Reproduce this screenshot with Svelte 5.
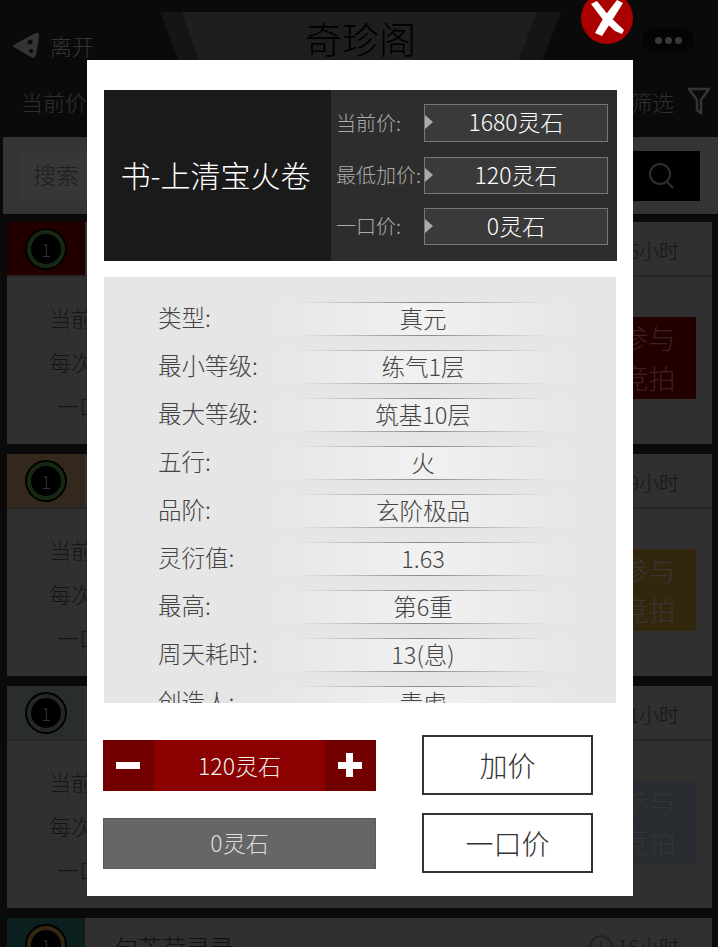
<script>
	const listings = [
		{ tone: 'red', ring: 'green', name: '', left: '6小时' },
		{ tone: 'tan', ring: 'green', name: '', left: '9小时' },
		{ tone: 'slate', ring: 'grey', name: '', left: '11小时' },
		{ tone: 'teal', ring: 'gold', name: '句芒荷灵录', left: '16小时' }
	];

	const prices = [
		{ label: '当前价:', value: '1680灵石' },
		{ label: '最低加价:', value: '120灵石' },
		{ label: '一口价:', value: '0灵石' }
	];

	const details = [
		['类型:', '真元'],
		['最小等级:', '练气1层'],
		['最大等级:', '筑基10层'],
		['五行:', '火'],
		['品阶:', '玄阶极品'],
		['灵衍值:', '1.63'],
		['最高:', '第6重'],
		['周天耗时:', '13(息)'],
		['创造人:', '青虚']
	];
</script>

<div class="page">
	<header class="topbar">
		<div class="back">
			<svg width="28" height="26" viewBox="0 0 28 26">
				<path d="M2 14 L24 2 Q27 1 26 5 L23 23 Q22 26 19 24 Z" fill="#ccc" stroke="#ccc" stroke-width="2" stroke-linejoin="round" />
				<circle cx="18" cy="10" r="2.5" fill="#282828" />
				<circle cx="19" cy="19" r="2" fill="#282828" />
			</svg>
			<span>离开</span>
		</div>
		<div class="title-plate"><h1>奇珍阁</h1></div>
		<div class="more"><i></i><i></i><i></i></div>
	</header>

	<div class="sortbar">
		<span>当前价</span>
		<div class="filter">
			<span>筛选</span>
			<svg width="22" height="28" viewBox="0 0 22 28" fill="none" stroke="#ccc" stroke-width="2.5">
				<path d="M1 2 H21 L13 13 V26 L9 23 V13 Z" />
			</svg>
		</div>
	</div>

	<div class="searchbar">
		<div class="search-input">搜索</div>
		<button class="search-btn" aria-label="搜索">
			<svg width="30" height="30" viewBox="0 0 30 30" fill="none" stroke="#bbb" stroke-width="2">
				<circle cx="14" cy="13" r="10" />
				<path d="M21 21 L27 27" />
			</svg>
		</button>
	</div>

	{#each listings as item}
		<article class="card">
			<div class="card-head">
				<div class="badge-cell {item.tone}">
					<div class="badge {item.ring}"><span>1</span></div>
				</div>
				<div class="card-name">{item.name}</div>
				<div class="time">
					<svg width="26" height="26" viewBox="0 0 26 26" fill="none" stroke="#888" stroke-width="2">
						<circle cx="13" cy="13" r="11" />
						<path d="M13 7 V14" />
					</svg>
					<span>{item.left}</span>
				</div>
			</div>
			<div class="card-body">
				<div class="card-lines">
					<p>当前价:</p>
					<p>每次加价:</p>
					<p class="indent">一口价:</p>
				</div>
				<div class="join-cell">
					<div class="join {item.tone}">参与<br />竞拍</div>
				</div>
			</div>
		</article>
	{/each}

	<div class="mask"></div>

	<div class="close">
		<svg width="52" height="52" viewBox="0 0 52 52">
			<circle cx="26" cy="26" r="26" fill="#ab0000" />
			<path d="M10 12 L16 9 L28 24 L43 38 L41 42 L34 39 L23 29 Z" fill="#fff" />
			<path d="M36 8 L42 11 L32 27 L21 44 L14 41 L23 25 Z" fill="#fff" />
		</svg>
	</div>

	<section class="modal">
		<div class="summary">
			<div class="item-name">书-上清宝火卷</div>
			<div class="price-list">
				{#each prices as price}
					<div class="price-row">
						<span class="price-label">{price.label}</span>
						<span class="price-value">{price.value}</span>
					</div>
				{/each}
			</div>
		</div>

		<div class="details">
			{#each details as [label, value]}
				<div class="detail-row">
					<span class="detail-label">{label}</span>
					<span class="detail-value">{value}</span>
				</div>
			{/each}
		</div>

		<div class="actions">
			<div class="amounts">
				<div class="stepper">
					<button class="step" aria-label="减少"><span class="minus"></span></button>
					<span class="step-value">120灵石</span>
					<button class="step" aria-label="增加"><span class="minus"></span><span class="plus-bar"></span></button>
				</div>
				<div class="buyout">0灵石</div>
			</div>
			<div class="buttons">
				<button class="outline">加价</button>
				<button class="outline">一口价</button>
			</div>
		</div>
	</section>
</div>

<style>
	:global(body) {
		margin: 0;
		background: #282828;
	}

	.page {
		position: relative;
		width: 718px;
		height: 947px;
		overflow: hidden;
		background: #282828;
		font-family: 'Noto Sans CJK SC', 'Noto Sans', sans-serif;
		font-weight: 300;
		color: #666;
	}

	.topbar {
		display: grid;
		grid-template-columns: 160px 401px 157px;
		height: 60px;
		padding-top: 12px;
		box-sizing: border-box;
	}

	.back {
		display: flex;
		align-items: center;
		gap: 10px;
		padding: 14px 0 0 12px;
		font-size: 22px;
		color: #ccc;
	}

	.title-plate {
		background: #555;
		clip-path: polygon(0 0, 100% 0, 95% 100%, 5% 100%);
	}

	.title-plate h1 {
		height: 100%;
		margin: 0;
		background: #7a7a7a;
		clip-path: polygon(5.5% 0, 94% 0, 89% 100%, 10% 100%);
		font-size: 37px;
		font-weight: 300;
		line-height: 52px;
		text-align: center;
		color: #000;
	}

	.more {
		display: flex;
		align-items: center;
		justify-content: center;
		gap: 3px;
		width: 52px;
		height: 25px;
		margin: 16px 0 0 81px;
		border-radius: 13px;
		background: #111;
	}

	.more i {
		width: 7px;
		height: 7px;
		border-radius: 50%;
		background: #ddd;
	}

	.sortbar {
		display: flex;
		justify-content: space-between;
		align-items: center;
		height: 77px;
		padding: 5px 8px 0 21px;
		box-sizing: border-box;
		font-size: 22px;
		color: #bbb;
	}

	.filter {
		display: flex;
		align-items: center;
		gap: 14px;
	}

	.searchbar {
		display: flex;
		justify-content: space-between;
		align-items: center;
		height: 77px;
		margin-left: 3px;
		padding: 0 18px 0 17px;
		background: #d0d0d0;
		box-sizing: border-box;
	}

	.search-input {
		width: 300px;
		height: 50px;
		padding-left: 13px;
		box-sizing: border-box;
		background: #dadada;
		font-size: 23px;
		line-height: 46px;
		color: #777;
	}

	.search-btn {
		display: flex;
		align-items: center;
		justify-content: flex-end;
		width: 100px;
		height: 50px;
		padding: 0 24px 0 0;
		border: 0;
		background: #000;
	}

	.card {
		width: 705px;
		height: 222px;
		margin: 8px 0 0 7px;
		background: #c0c0c0;
		box-sizing: border-box;
	}

	.card + .card {
		margin-top: 10px;
	}

	.card-head {
		display: flex;
		align-items: stretch;
		height: 55px;
		border-bottom: 2px solid #999;
		box-sizing: border-box;
	}

	.badge-cell {
		display: flex;
		align-items: center;
		justify-content: center;
		width: 78px;
		flex: none;
	}

	.red { background: #8c0000; }
	.tan { background: #d0a070; }
	.slate { background: #a8b4b8; }
	.teal { background: #2f7f78; }

	.badge {
		display: flex;
		align-items: center;
		justify-content: center;
		width: 30px;
		height: 30px;
		border: 4px solid;
		border-radius: 50%;
		background: #000;
		box-shadow: 0 0 0 2px #000;
		font-size: 18px;
		color: #ccc;
	}

	.green { border-color: #5aa04a; }
	.grey { border-color: #999; }
	.gold { border-color: #d09a48; }

	.card-name {
		flex: 1;
		padding: 11px 0 0 29px;
		font-size: 24px;
		color: #444;
	}

	.time {
		display: flex;
		align-items: center;
		gap: 4px;
		padding: 4px 33px 0 0;
		font-size: 20px;
		color: #555;
	}

	.card-body {
		display: flex;
		justify-content: space-between;
		height: 167px;
		padding-left: 42px;
	}

	.card-lines {
		padding-top: 24px;
	}

	.card-lines p {
		margin: 0 0 12px;
		font-size: 22px;
		line-height: 32px;
		color: #555;
	}

	.card-lines .indent {
		padding-left: 8px;
	}

	.join-cell {
		width: 118px;
		padding: 40px 17px 0 6px;
		border-left: 1px solid #aaa;
		box-sizing: border-box;
	}

	.join {
		display: flex;
		align-items: center;
		justify-content: center;
		width: 95px;
		height: 82px;
		font-size: 27px;
		line-height: 40px;
		text-align: center;
		color: #d88;
	}

	.join.tan {
		background: #c89830;
		color: #ecc;
	}

	.join.slate {
		background: #a0acbc;
		color: #ccd;
	}

	.mask {
		position: absolute;
		inset: 0;
		background: rgba(0, 0, 0, 0.75);
	}

	.close {
		position: absolute;
		top: -8px;
		left: 581px;
		z-index: 2;
		height: 52px;
	}

	.modal {
		position: absolute;
		top: 60px;
		left: 87px;
		width: 546px;
		height: 836px;
		padding: 30px 16px 0 17px;
		box-sizing: border-box;
		background: #fff;
	}

	.summary {
		display: grid;
		grid-template-columns: 227px 286px;
		height: 171px;
		width: 513px;
		background: #2d2d2d;
	}

	.item-name {
		display: flex;
		align-items: center;
		justify-content: center;
		padding: 0 4px 4px 0;
		background: #1a1a1a;
		font-size: 30px;
		color: #fff;
	}

	.price-list {
		display: flex;
		flex-direction: column;
		gap: 14px;
		padding: 14px 9px 0 5px;
	}

	.price-row {
		display: flex;
		align-items: center;
		justify-content: space-between;
	}

	.price-row:first-child {
		margin-bottom: 1px;
	}

	.price-label {
		margin-top: -2px;
		font-size: 20px;
		color: #aaa;
		white-space: nowrap;
	}

	.price-value {
		position: relative;
		width: 184px;
		height: 37px;
		border: 1px solid #777;
		box-sizing: border-box;
		background: #3a3a3a;
		font-size: 23px;
		line-height: 33px;
		text-align: center;
		color: #fff;
	}

	.price-row:first-child .price-value {
		height: 38px;
	}

	.price-value::before {
		content: '';
		position: absolute;
		top: 10px;
		left: 0;
		border-left: 8px solid #aaa;
		border-top: 7px solid transparent;
		border-bottom: 7px solid transparent;
	}

	.details {
		height: 426px;
		width: 512px;
		margin-top: 16px;
		padding-top: 25px;
		box-sizing: border-box;
		overflow: hidden;
		background: #e6e6e6;
	}

	.detail-row {
		display: flex;
		align-items: center;
		height: 34px;
		margin-bottom: 14px;
		padding-left: 54px;
		color: #444;
	}

	.detail-label {
		width: 112px;
		flex: none;
		margin-top: -4px;
		font-size: 23.5px;
		white-space: nowrap;
	}

	.detail-value {
		width: 306px;
		height: 34px;
		font-size: 23.5px;
		line-height: 32px;
		text-align: center;
		background:
			linear-gradient(90deg, transparent 8%, #888 50%, transparent 92%) top / 100% 1px no-repeat,
			linear-gradient(90deg, transparent 8%, #888 50%, transparent 92%) bottom / 100% 1px no-repeat,
			linear-gradient(90deg, transparent, #f1f1f1 50%, transparent);
	}

	.actions {
		display: flex;
		justify-content: space-between;
		padding: 32px 24px 0 0;
		margin-left: -1px;
	}

	.amounts {
		display: flex;
		flex-direction: column;
		gap: 27px;
		width: 273px;
		padding-top: 5px;
	}

	.stepper {
		display: flex;
		align-items: center;
		height: 51px;
		background: #8b0000;
	}

	.step {
		position: relative;
		width: 51px;
		height: 51px;
		flex: none;
		padding: 0;
		border: 0;
		background: #730000;
	}

	.minus,
	.plus-bar {
		position: absolute;
		background: #fff;
	}

	.minus {
		top: 22px;
		left: 13px;
		width: 24px;
		height: 7px;
	}

	.plus-bar {
		top: 13px;
		left: 21px;
		width: 7px;
		height: 24px;
	}

	.step-value {
		flex: 1;
		margin-top: -2px;
		font-size: 23px;
		text-align: center;
		color: #eee;
	}

	.buyout {
		height: 51px;
		border: 1px solid #5a5a5a;
		box-sizing: border-box;
		background: #666;
		font-size: 23px;
		line-height: 46px;
		text-align: center;
		color: #ddd;
	}

	.buttons {
		display: flex;
		flex-direction: column;
		gap: 18px;
	}

	.outline {
		width: 171px;
		height: 60px;
		padding: 0;
		border: 2px solid #333;
		background: #fff;
		font-family: inherit;
		font-size: 28px;
		font-weight: 300;
		color: #333;
	}
</style>
